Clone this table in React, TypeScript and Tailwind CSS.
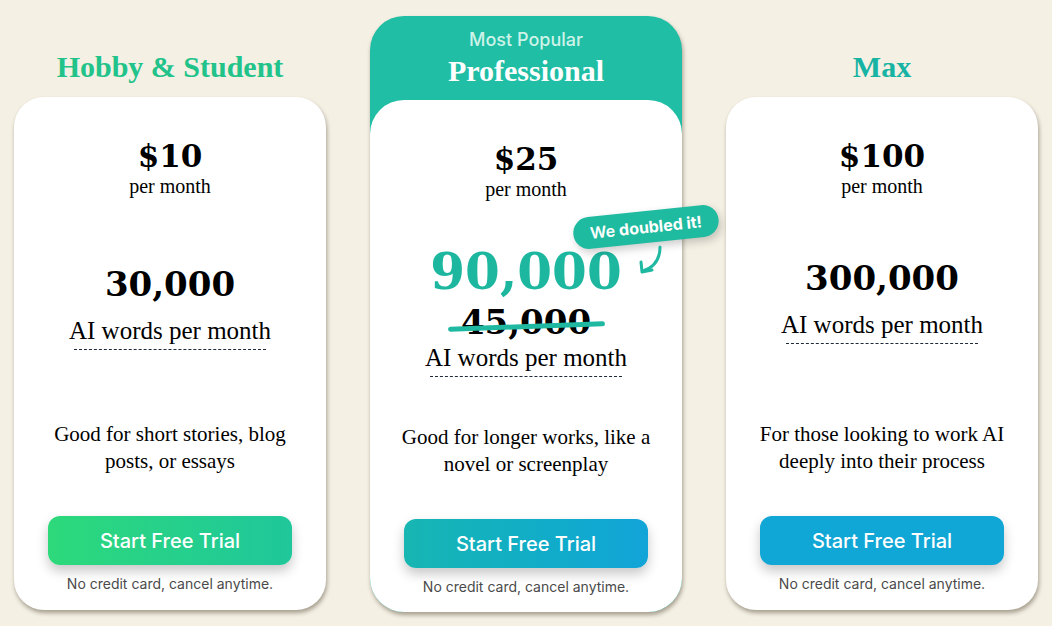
import type { ReactNode } from "react";

type Plan = {
  price: string;
  desc: string[];
  button: string;
};

function PriceBlock({ price }: { price: string }) {
  return (
    <div className="flex flex-col items-center">
      <div className="font-['DejaVu_Serif',serif] font-bold text-[31px] leading-[38px] text-black">
        {price}
      </div>
      <div className="font-['Liberation_Serif',serif] text-[20px] leading-[22px] text-black">
        per month
      </div>
    </div>
  );
}

function WordsLabel({ className }: { className: string }) {
  return (
    <>
      <div className={`font-['Liberation_Serif',serif] text-[25px] leading-[30px] text-black ${className}`}>
        AI words per month
      </div>
      <div className="mx-auto mt-[3px] w-[192px] border-b border-dashed border-gray-800" />
    </>
  );
}

function CardBottom({ plan }: { plan: Plan }) {
  return (
    <>
      <p className="font-['Liberation_Serif',serif] text-[21px] leading-[27px] text-black text-center">
        {plan.desc[0]}
        <br />
        {plan.desc[1]}
      </p>
      <button
        className={`mx-auto mt-[41px] h-[49px] w-[244px] rounded-[12px] font-['Inter',sans-serif] text-[20px] font-medium text-white shadow-[0_6px_12px_rgba(0,0,0,0.22)] ${plan.button}`}
      >
        Start Free Trial
      </button>
      <div className="mt-[9px] text-center font-['Inter',sans-serif] text-[14px] leading-[20px] text-[#4a4a4a]">
        No credit card, cancel anytime.
      </div>
    </>
  );
}

function Card({ plan, children }: { plan: Plan; children: ReactNode }) {
  return (
    <div className="relative flex h-[513px] flex-col rounded-[30px] bg-white pt-[40px] shadow-[1px_3px_4px_rgba(70,60,40,0.45)]">
      <PriceBlock price={plan.price} />
      <div className="h-[224px] text-center">{children}</div>
      <CardBottom plan={plan} />
    </div>
  );
}

export default function App() {
  const hobby: Plan = {
    price: "$10",
    desc: ["Good for short stories, blog", "posts, or essays"],
    button: "bg-gradient-to-r from-[#2dd97a] to-[#1fc79a]",
  };
  const pro: Plan = {
    price: "$25",
    desc: ["Good for longer works, like a", "novel or screenplay"],
    button: "bg-gradient-to-r from-[#17b6b2] to-[#12a4d8]",
  };
  const max: Plan = {
    price: "$100",
    desc: ["For those looking to work AI", "deeply into their process"],
    button: "bg-[#10a6d6]",
  };

  return (
    <div className="min-h-[626px] w-full bg-[#f4f0e4]">
      <div className="flex gap-[44px] px-[14px] pt-[16px]">
        {/* Hobby */}
        <div className="flex w-[312px] flex-col">
          <div className="h-[81px] pt-[33px] text-center font-['Liberation_Serif',serif] text-[30px] font-bold leading-[36px] text-[#22c38a]">
            Hobby &amp; Student
          </div>
          <Card plan={hobby}>
            <div className="pt-[67px] font-['DejaVu_Serif',serif] text-[34px] font-bold leading-[40px] text-black">
              30,000
            </div>
            <WordsLabel className="mt-[12px]" />
          </Card>
        </div>

        {/* Professional */}
        <div className="flex w-[312px] flex-col rounded-[34px] bg-[#1fbea5] shadow-[1px_3px_4px_rgba(70,60,40,0.45)]">
          <div className="flex h-[84px] flex-col items-center pt-[12px]">
            <div className="font-['Inter',sans-serif] text-[18px] font-medium leading-[24px] text-[#cdf3e8]">
              Most Popular
            </div>
            <div className="mt-[1px] font-['Liberation_Serif',serif] text-[30px] font-bold leading-[36px] text-white">
              Professional
            </div>
          </div>
          <div className="relative flex h-[512px] flex-col rounded-[34px] bg-white pt-[40px]">
            <PriceBlock price={pro.price} />
            <div className="h-[224px] text-center">
              <div className="pt-[44px] font-['DejaVu_Serif',serif] text-[50px] font-bold leading-[56px] text-[#1db7a0]">
                90,000
              </div>
              <div className="relative mt-[2px] font-['DejaVu_Serif',serif] text-[34px] font-bold leading-[40px] text-black">
                45,000
                <div className="absolute left-[78px] top-[22px] h-[5px] w-[157px] -rotate-2 rounded-full bg-[#1fb9a2]" />
              </div>
              <WordsLabel className="mt-[1px]" />
            </div>
            <CardBottom plan={pro} />

            {/* badge */}
            <div className="absolute left-[203px] top-[111px] flex h-[32px] w-[146px] -rotate-[6deg] items-center justify-center rounded-full bg-[#1fbba0] font-['Inter',sans-serif] text-[16px] text-white shadow-[2px_4px_8px_rgba(0,0,0,0.2)]">
              <span className="font-semibold">We</span>
              <span className="ml-[4px] font-bold">doubled it!</span>
            </div>
            <svg
              className="absolute left-[266px] top-[144px]"
              width="30"
              height="32"
              viewBox="0 0 30 32"
              fill="none"
              stroke="#1fb9a2"
              strokeWidth="3"
              strokeLinecap="round"
              strokeLinejoin="round"
            >
              <path d="M24 3 C24 15, 19 23, 7 27" />
              <path d="M5 18 L6 28 L16 26" />
            </svg>
          </div>
        </div>

        {/* Max */}
        <div className="flex w-[312px] flex-col">
          <div className="h-[81px] pt-[33px] text-center font-['Liberation_Serif',serif] text-[30px] font-bold leading-[36px] text-[#17b3a3]">
            Max
          </div>
          <Card plan={max}>
            <div className="pt-[61px] font-['DejaVu_Serif',serif] text-[34px] font-bold leading-[40px] text-black">
              300,000
            </div>
            <WordsLabel className="mt-[12px]" />
          </Card>
        </div>
      </div>
    </div>
  );
}
